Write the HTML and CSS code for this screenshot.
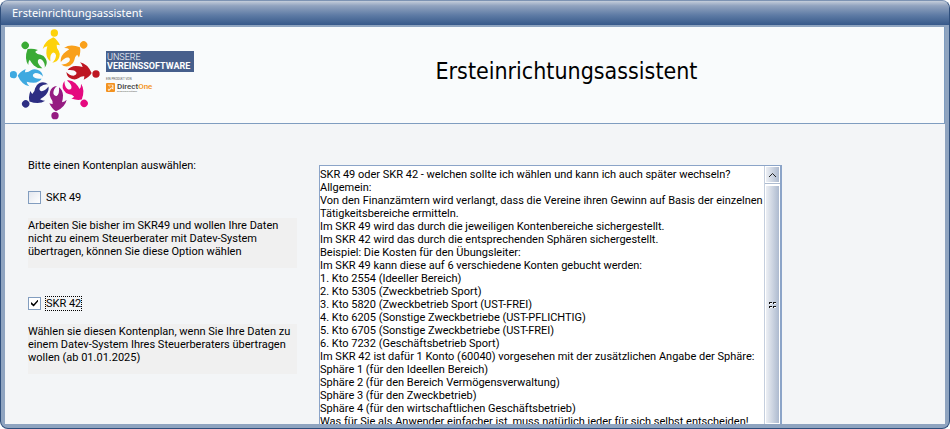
FILE: index.html
```html
<!DOCTYPE html>
<html lang="de">

<head>
    <meta charset="UTF-8">
    <meta name="viewport" content="width=device-width, initial-scale=1.0">
    <title>Ersteinrichtungsassistent</title>
    <link rel="stylesheet" href="styles.css">
</head>

<body>
    <div class="window">
        <div class="titlebar">Ersteinrichtungsassistent</div>
        <div class="client">
            <header class="head">
                <svg class="people" viewBox="0 0 285 285" aria-hidden="true">
                    <defs>
                        <g id="person">
                            <circle cx="133" cy="15" r="11" />
                            <path d="M130 28 Q142 35 150 52 Q145 50 140 50 Q139 60 146 68 Q151 76 148 87 Q144 102 127 104 Q138 95 138 82 Q136 72 128 74 Q119 79 121 100 Q110 92 109 76 Q109 65 112 55 Q104 56 98 63 Q102 41 130 28 Z" />
                        </g>
                    </defs>
                    <use href="#person" fill="#fdd20a" />
                    <use href="#person" fill="#f9a01b" transform="rotate(45 134 139)" />
                    <use href="#person" fill="#be1622" transform="rotate(90 134 139)" />
                    <use href="#person" fill="#e5097f" transform="rotate(135 134 139)" />
                    <use href="#person" fill="#951b81" transform="rotate(180 134 139)" />
                    <use href="#person" fill="#2d2e83" transform="rotate(225 134 139)" />
                    <use href="#person" fill="#3fa9e0" transform="rotate(270 134 139)" />
                    <use href="#person" fill="#3aaa35" transform="rotate(315 134 139)" />
                </svg>
                <div class="brand">
                    <div class="brand-name">UNSERE<br><b>VEREINSSOFTWARE</b></div>
                    <div class="brand-note">EIN PRODUKT VON</div>
                    <div class="direct">
                        <svg class="direct-icon" viewBox="0 0 27 27" aria-hidden="true">
                            <rect width="27" height="27" rx="3" fill="#f39220" />
                            <path d="M5 5h17v15l-5-4-8 8-4-4 8-8z" fill="#fff" />
                            <path d="M9 7h10v9l-3-3-7 7-2-1 6-8z" fill="#f39220" />
                        </svg>
                        <div class="direct-text">
                            <div class="direct-name">Direct<span>One</span></div>
                            <div class="direct-note">Die Business-Software</div>
                        </div>
                    </div>
                </div>
                <h1>Ersteinrichtungsassistent</h1>
            </header>
            <main class="content">
                <div class="options">
                    <p>Bitte einen Kontenplan auswählen:</p>
                    <label class="option"><input type="checkbox"><span>SKR 49</span></label>
                    <div class="hint">Arbeiten Sie bisher im SKR49 und wollen Ihre Daten<br>nicht zu einem Steuerberater mit Datev-System<br>übertragen, können Sie diese Option wählen</div>
                    <label class="option"><input type="checkbox" checked><span class="focused">SKR 42</span></label>
                    <div class="hint">Wählen sie diesen Kontenplan, wenn Sie Ihre Daten zu<br>einem Datev-System Ihres Steuerberaters übertragen<br>wollen (ab 01.01.2025)</div>
                </div>
                <div class="memo">
                    <textarea readonly wrap="off" aria-label="Erläuterung der Kontenpläne">SKR 49 oder SKR 42 - welchen sollte ich wählen und kann ich auch später wechseln?
Allgemein:
Von den Finanzämtern wird verlangt, dass die Vereine ihren Gewinn auf Basis der einzelnen
Tätigkeitsbereiche ermitteln.
Im SKR 49 wird das durch die jeweiligen Kontenbereiche sichergestellt.
Im SKR 42 wird das durch die entsprechenden Sphären sichergestellt.
Beispiel: Die Kosten für den Übungsleiter:
Im SKR 49 kann diese auf 6 verschiedene Konten gebucht werden:
1. Kto 2554 (Ideeller Bereich)
2. Kto 5305 (Zweckbetrieb Sport)
3. Kto 5820 (Zweckbetrieb Sport (UST-FREI)
4. Kto 6205 (Sonstige Zweckbetriebe (UST-PFLICHTIG)
5. Kto 6705 (Sonstige Zweckbetriebe (UST-FREI)
6. Kto 7232 (Geschäftsbetrieb Sport)
Im SKR 42 ist dafür 1 Konto (60040) vorgesehen mit der zusätzlichen Angabe der Sphäre:
Sphäre 1 (für den Ideellen Bereich)
Sphäre 2 (für den Bereich Vermögensverwaltung)
Sphäre 3 (für den Zweckbetrieb)
Sphäre 4 (für den wirtschaftlichen Geschäftsbetrieb)
Was für Sie als Anwender einfacher ist, muss natürlich jeder für sich selbst entscheiden!</textarea>
                    <div class="scrollbar">
                        <button class="scroll-up" type="button" aria-label="Nach oben">
                            <svg viewBox="0 0 9 6" aria-hidden="true"><path d="M1 5 4.500 1.500 8 5" fill="none" stroke="#222" /></svg>
                        </button>
                        <div class="thumb">
                            <svg viewBox="0 0 8 8" aria-hidden="true"><path d="M1 2h2v1H1zM5 2h2v1H5zM1 6h2v1H1zM5 6h2v1H5z" fill="#fff" /><path d="M0 1h3v1H1v1H0zM4 1h3v1H5v1H4zM0 5h3v1H1v1H0zM4 5h3v1H5v1H4z" fill="#111" /></svg>
                        </div>
                    </div>
                </div>
            </main>
        </div>
    </div>
</body>

</html>
```

FILE: styles.css
```css
* {
    box-sizing: border-box;
}

body {
    margin: 0;
    height: 100vh;
    overflow: hidden;
    background: #fff;
    color: #000;
    font-family: Roboto, sans-serif;
    font-size: 11px;
    line-height: 13px;
}

.window {
    display: flex;
    flex-direction: column;
    height: 100%;
    border: 1px solid #2f4f7d;
    border-top-color: #7d93b3;
    border-radius: 8px;
    background: #8fa4c0;
    overflow: hidden;
}

.titlebar {
    height: 24px;
    padding: 0 11px;
    background: linear-gradient(#c5cedb, #91a3bf 20%, #5d7aa4 60%, #37598a);
    color: #fff;
    font-family: "Noto Sans", sans-serif;
    font-size: 11px;
    line-height: 24px;
}

.client {
    display: flex;
    flex: 1;
    flex-direction: column;
    min-height: 0;
    margin: 2px 4px 4px;
    background: #f3f5f7;
}

.head {
    display: flex;
    flex: none;
    height: 97px;
    padding: 1px 5px;
    border: solid #7f9dc0;
    border-width: 0 1px 1px 0;
    background: #f9fbfc;
}

.people {
    width: 95px;
    height: 95px;
}

.brand {
    flex: none;
    width: 88px;
    margin: 23px 0 0 1px;
}

.brand-name {
    height: 21px;
    padding: 2px 1px;
    background: #475f8c;
    color: #fff;
    font-size: 9px;
    line-height: 9px;
    font-weight: 300;
    white-space: nowrap;
}

.brand-name b {
    font-weight: 700;
}

.brand-note {
    margin-top: 5px;
    color: #555;
    font-size: 3px;
    line-height: 4px;
}

.direct {
    display: flex;
    gap: 2px;
    margin-top: 2px;
}

.direct-icon {
    width: 9px;
    height: 9px;
}

.direct-name {
    color: #444;
    font-size: 8px;
    line-height: 7px;
    font-weight: 500;
}

.direct-name span {
    color: #f39220;
}

.direct-note {
    color: #555;
    font-size: 2px;
    line-height: 3px;
}

h1 {
    flex: 1;
    margin: 0;
    text-align: center;
    font-family: "DejaVu Sans Condensed", sans-serif;
    font-size: 23px;
    line-height: 86px;
    font-weight: 400;
}

.content {
    display: flex;
    flex: 1;
    gap: 22px;
    min-height: 0;
    padding: 35px 23px 0;
}

.options {
    flex: 0 1 269px;
    white-space: nowrap;
}

.options p {
    margin: 0 0 17px;
}

.option {
    display: flex;
    align-items: center;
    gap: 4px;
    height: 16px;
}

.option input {
    display: grid;
    place-items: center;
    width: 13px;
    height: 13px;
    margin: 0;
    border: 1px solid #829dbf;
    background: linear-gradient(135deg, #e3e7ef, #fff);
    appearance: none;
}

.option input:checked {
    background: #fff;
}

.option input:checked::before {
    content: "";
    width: 7px;
    height: 7px;
    background: #000;
    clip-path: polygon(0 35%, 38% 68%, 100% 0, 100% 30%, 38% 100%, 0 68%);
}

.option span {
    border: 1px dotted transparent;
}

.option .focused {
    border-color: #000;
}

.hint {
    height: 50px;
    margin: 13px 0 27px;
    padding-top: 1px;
    background: #f0f0f0;
}

.memo {
    display: flex;
    flex: 0 1 463px;
    margin-top: 6px;
    border: 1px solid #8ba4c8;
    border-width: 1px 2px 0 1px;
    background: #fff;
}

.memo textarea {
    flex: 1;
    min-width: 0;
    margin: 0;
    padding: 2px 0 0;
    border: 0;
    outline: 0;
    background: #fff;
    color: #000;
    font: inherit;
    resize: none;
    overflow: hidden;
}

.scrollbar {
    display: flex;
    flex: none;
    flex-direction: column;
    width: 16px;
    border-left: 1px solid #c5cfde;
}

.scroll-up,
.thumb {
    display: grid;
    place-items: center;
    padding: 0;
    border: 1px solid #fff;
    background: linear-gradient(90deg, #eceff4, #adbacf);
}

.scroll-up {
    height: 17px;
    border-radius: 0;
    box-shadow: 0 1px #aebcd0;
}

.scroll-up svg {
    width: 9px;
    height: 6px;
}

.thumb {
    flex: 1;
    margin-top: 2px;
}

.thumb svg {
    width: 8px;
    height: 8px;
}
```
